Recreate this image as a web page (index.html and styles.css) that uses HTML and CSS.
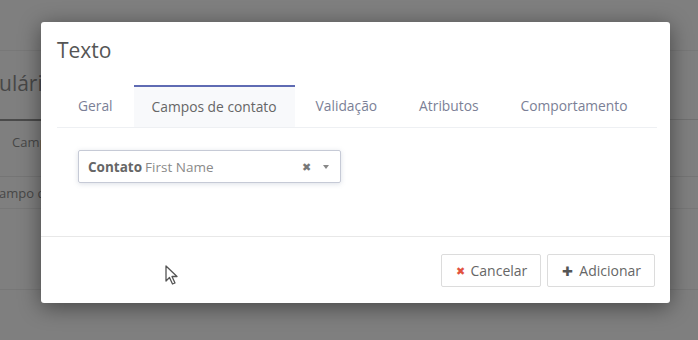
FILE: index.html
```html
<!DOCTYPE html>
<html>

<head>
    <title>Texto</title>
    <link rel="stylesheet" href="styles.css">
</head>

<body>
    <div class="page">
        <div class="page-top"></div>
        <h2 class="page-title">ulários</h2>
        <div class="page-tabs">
            <span class="page-tab-bar"></span>
        </div>
        <div class="page-row">Campos</div>
        <div class="page-field">ampo de texto</div>
        <div class="page-gap"></div>
    </div>

    <div class="modal">
        <div class="modal-header">
            <h3>Texto</h3>
        </div>

        <ul class="tabs">
            <li class="tab">Geral</li>
            <li class="tab active">Campos de contato</li>
            <li class="tab">Validação</li>
            <li class="tab">Atributos</li>
            <li class="tab">Comportamento</li>
        </ul>

        <div class="modal-body">
            <div class="select">
                <span class="select-label">Contato</span>
                <span class="select-value">First Name</span>
                <span class="select-clear">&#x2716;</span>
                <span class="select-caret"></span>
            </div>
        </div>

        <div class="modal-footer">
            <button class="btn"><span class="icon-x">&#x2716;</span>Cancelar</button>
            <button class="btn"><span class="icon-plus">&#x271A;</span>Adicionar</button>
        </div>

        <svg class="cursor" width="14" height="21" viewBox="0 0 14 21">
            <path d="M1 1 L1 16 L4.5 12.5 L7.5 19 L10 18 L7 11.5 L12 11.5 Z" fill="#fff" stroke="#555" stroke-width="1.3" stroke-linejoin="round" />
        </svg>
    </div>
</body>

</html>
```

FILE: styles.css
```css
html,
body {
    margin: 0;
    height: 100%;
}

body {
    font-family: "Open Sans", "Noto Sans", sans-serif;
    background-color: #7f7f7f;
    overflow: hidden;
}

/* dimmed page behind the dialog */
.page {
    color: #474747;
}

.page-top {
    height: 50px;
    border-bottom: 1px solid #787878;
}

.page-title {
    margin: 0 0 0 -1px;
    height: 62px;
    line-height: 64px;
    font-size: 21px;
    font-weight: normal;
    white-space: nowrap;
}

.page-tabs {
    height: 6px;
    border-bottom: 1px solid #707070;
}

.page-tab-bar {
    display: block;
    width: 60px;
    height: 6px;
    border-bottom: 2px solid #4a4a4a;
}

.page-row {
    height: 56px;
    padding-left: 12px;
    line-height: 44px;
    font-size: 13px;
    border-bottom: 1px solid #757575;
}

.page-field {
    height: 31px;
    margin-left: -1px;
    line-height: 32px;
    font-size: 13px;
    border-bottom: 1px solid #777;
    white-space: nowrap;
}

.page-gap {
    height: 80px;
    border-bottom: 1px solid #777;
}

/* dialog */
.modal {
    position: absolute;
    left: 41px;
    top: 22px;
    width: 629px;
    height: 281px;
    background: #fff;
    border-radius: 3px;
    box-shadow: 0 4px 22px rgba(0, 0, 0, 0.45);
    display: flex;
    flex-direction: column;
}

.modal-header {
    padding: 14px 16px 0;
    height: 49px;
}

.modal-header h3 {
    margin: 0;
    font-size: 21px;
    font-weight: normal;
    line-height: 28px;
    color: #555;
}

.tabs {
    list-style: none;
    margin: 0 13px 0 16px;
    padding: 0;
    display: flex;
    height: 42px;
    border-bottom: 1px solid #eef0f3;
}

.tab {
    padding: 0 21px;
    line-height: 42px;
    font-size: 13.8px;
    color: #7b7f96;
}

.tab.active {
    color: #666;
    background: #f8f9fb;
    border-top: 2px solid #5f6bb3;
    line-height: 40px;
    padding: 0 18px;
}

.modal-body {
    height: 86px;
    padding: 22px 0 0 37px;
    border-bottom: 1px solid #e8e8e8;
}

.select {
    height: 31px;
    width: 252px;
    border: 1px solid #c6cad6;
    border-radius: 2px;
    box-shadow: 0 1px 5px rgba(120, 130, 160, 0.25);
    display: flex;
    align-items: center;
    padding-left: 9px;
    font-size: 13.5px;
}

.select-label {
    font-weight: bold;
    color: #666;
    margin-right: 3px;
}

.select-value {
    color: #8a8a8a;
    flex: 1;
}

.select-clear {
    font-size: 11px;
    color: #777;
    margin-right: 12px;
}

.select-caret {
    width: 0;
    height: 0;
    border-left: 3px solid transparent;
    border-right: 3px solid transparent;
    border-top: 4px solid #888;
    margin-right: 11px;
}

.modal-footer {
    flex: 1;
    display: flex;
    justify-content: flex-end;
    align-items: flex-start;
    gap: 6px;
    padding: 17px 15px 0;
}

.btn {
    height: 33px;
    padding: 0 13px 0 14px;
    background: #fff;
    border: 1px solid #dcdcdc;
    border-radius: 2px;
    font-family: "Open Sans", "Noto Sans", sans-serif;
    font-size: 14px;
    color: #666;
    display: flex;
    align-items: center;
}

.icon-x {
    color: #e2533f;
    font-size: 11px;
    margin-right: 6px;
}

.icon-plus {
    color: #555;
    font-size: 13px;
    margin-right: 6px;
}

.cursor {
    position: absolute;
    left: 124px;
    top: 243px;
}
```
